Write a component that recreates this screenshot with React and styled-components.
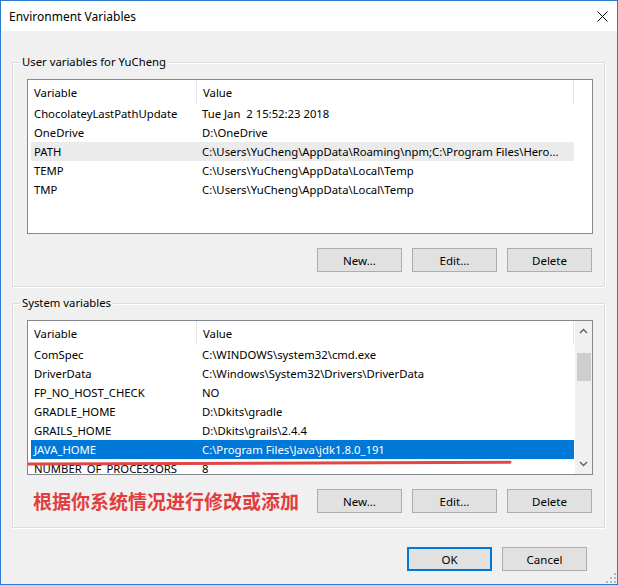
import React from 'react';
import styled, { createGlobalStyle } from 'styled-components';

const GlobalStyle = createGlobalStyle`
    html, body {
        margin: 0;
        padding: 0;
        background: #f0f0f0;
    }
    * {
        box-sizing: border-box;
    }
`;

const Window = styled.div`
    width: 618px;
    height: 585px;
    border: 1px solid #2b7ccf;
    background: #f0f0f0;
    display: flex;
    flex-direction: column;
    position: relative;
    font-family: "Noto Sans", "Open Sans", sans-serif;
    font-size: 11.3px;
    color: #000;
`;

const TitleBar = styled.div`
    height: 30px;
    background: #fff;
    display: flex;
    align-items: center;
    justify-content: space-between;
    padding-left: 8px;
    padding-right: 9px;
    font-size: 12px;
`;

const Body = styled.div`
    padding: 31px 12px 0 11px;
    display: flex;
    flex-direction: column;
    gap: 16px;
`;

const GroupBox = styled.div`
    position: relative;
    border: 1px solid #dcdcdc;
    box-shadow: 1px 1px 0 #fff, inset 1px 1px 0 #fff;
    padding: 16px 11px 14px 14px;
    display: flex;
    flex-direction: column;
    gap: 14px;
`;

const Legend = styled.span`
    position: absolute;
    top: -9px;
    left: 7px;
    padding: 0 2px;
    line-height: 16px;
    background: #f0f0f0;
`;

const ListBox = styled.div`
    position: relative;
    height: 155px;
    border: 1px solid #828790;
    background: #fff;
    overflow: hidden;
    display: flex;
`;

const ListContent = styled.div`
    flex: 1;
    min-width: 0;
    display: flex;
    flex-direction: column;
`;

const Header = styled.div`
    height: 24px;
    display: grid;
    grid-template-columns: 169px 377px 1fr;
    flex-shrink: 0;
`;

const HeaderCell = styled.div`
    padding-left: 6px;
    display: flex;
    align-items: center;
    border-right: ${props => props.$divider ? '1px solid #e5e5e5' : 'none'};
`;

const Row = styled.div`
    height: 19px;
    flex-shrink: 0;
    margin-left: 3px;
    width: 543px;
    display: grid;
    grid-template-columns: 168px 1fr;
    align-items: center;
    background: ${props => props.$selected ? '#0078d7' : props.$hover ? '#ebebeb' : 'transparent'};
    color: ${props => props.$selected ? '#fff' : '#000'};
`;

const Cell = styled.div`
    padding-left: 3px;
    white-space: pre;
    overflow: hidden;
    text-overflow: ellipsis;
`;

const ScrollBar = styled.div`
    width: 17px;
    flex-shrink: 0;
    background: #f0f0f0;
    display: flex;
    flex-direction: column;
    align-items: center;
`;

const ScrollArrow = styled.div`
    height: 20px;
    width: 17px;
    display: flex;
    align-items: center;
    justify-content: center;
`;

const ScrollThumb = styled.div`
    margin-top: 12px;
    width: 14px;
    height: 28px;
    background: #cdcdcd;
`;

const ScrollTrack = styled.div`
    flex: 1;
`;

const ButtonRow = styled.div`
    display: flex;
    align-items: center;
    gap: 10px;
    justify-content: flex-end;
    padding-right: 1px;
`;

const Note = styled.div`
    margin-left: 6px;
    margin-right: auto;
    color: #e23c3c;
    font-family: "Noto Sans CJK SC", sans-serif;
    font-weight: 700;
    font-size: 19px;
    line-height: 24px;
`;

const Button = styled.button`
    width: 85px;
    height: 24px;
    background: #e1e1e1;
    border: 1px solid ${props => props.$default ? '#0078d7' : '#adadad'};
    box-shadow: ${props => props.$default ? 'inset 0 0 0 1px #0078d7' : 'none'};
    font-family: inherit;
    font-size: 11.5px;
    color: #000;
    padding: 0;
`;

const Footer = styled.div`
    padding: 19px 30px 0 0;
    display: flex;
    justify-content: flex-end;
    gap: 10px;
`;

const Underline = styled.svg`
    position: absolute;
    left: 0;
    top: 139px;
`;

const Grip = styled.svg`
    position: absolute;
    right: 1px;
    bottom: 1px;
`;

const userVariables = [
    ['ChocolateyLastPathUpdate', 'Tue Jan  2 15:52:23 2018'],
    ['OneDrive', 'D:\\OneDrive'],
    ['PATH', 'C:\\Users\\YuCheng\\AppData\\Roaming\\npm;C:\\Program Files\\Hero...'],
    ['TEMP', 'C:\\Users\\YuCheng\\AppData\\Local\\Temp'],
    ['TMP', 'C:\\Users\\YuCheng\\AppData\\Local\\Temp'],
];

const systemVariables = [
    ['ComSpec', 'C:\\WINDOWS\\system32\\cmd.exe'],
    ['DriverData', 'C:\\Windows\\System32\\Drivers\\DriverData'],
    ['FP_NO_HOST_CHECK', 'NO'],
    ['GRADLE_HOME', 'D:\\Dkits\\gradle'],
    ['GRAILS_HOME', 'D:\\Dkits\\grails\\2.4.4'],
    ['JAVA_HOME', 'C:\\Program Files\\Java\\jdk1.8.0_191'],
    ['NUMBER_OF_PROCESSORS', '8'],
];

function Chevron({ up }) {
    return (
        <svg width="9" height="6" viewBox="0 0 9 6">
            <path d={up ? 'M1 5 L4.5 1.5 L8 5' : 'M1 1 L4.5 4.5 L8 1'} fill="none" stroke="#606060" strokeWidth="1.4" />
        </svg>
    );
}

function VariableList({ rows, hover, selected, scroll, children }) {
    return (
        <ListBox>
            <ListContent>
                <Header>
                    <HeaderCell $divider>Variable</HeaderCell>
                    <HeaderCell $divider>Value</HeaderCell>
                    <HeaderCell />
                </Header>
                {rows.map(([name, value]) => (
                    <Row key={name} $hover={name === hover} $selected={name === selected}>
                        <Cell>{name}</Cell>
                        <Cell>{value}</Cell>
                    </Row>
                ))}
            </ListContent>
            {scroll && (
                <ScrollBar>
                    <ScrollArrow><Chevron up /></ScrollArrow>
                    <ScrollThumb />
                    <ScrollTrack />
                    <ScrollArrow><Chevron /></ScrollArrow>
                </ScrollBar>
            )}
            {children}
        </ListBox>
    );
}

function App() {
    return (
        <Window>
            <GlobalStyle />
            <TitleBar>
                <span>Environment Variables</span>
                <svg width="11" height="11" viewBox="0 0 11 11">
                    <path d="M0.5 0.5 L10.5 10.5 M10.5 0.5 L0.5 10.5" stroke="#000" strokeWidth="1" />
                </svg>
            </TitleBar>
            <Body>
                <GroupBox>
                    <Legend>User variables for YuCheng</Legend>
                    <VariableList rows={userVariables} hover="PATH" />
                    <ButtonRow>
                        <Button>New...</Button>
                        <Button>Edit...</Button>
                        <Button>Delete</Button>
                    </ButtonRow>
                </GroupBox>
                <GroupBox>
                    <Legend>System variables</Legend>
                    <VariableList rows={systemVariables} selected="JAVA_HOME" scroll>
                        <Underline width="490" height="6" viewBox="0 0 490 6">
                            <path d="M0 4 L482 2.2" stroke="#e04848" strokeWidth="3" strokeLinecap="round" />
                        </Underline>
                    </VariableList>
                    <ButtonRow>
                        <Note>根据你系统情况进行修改或添加</Note>
                        <Button>New...</Button>
                        <Button>Edit...</Button>
                        <Button>Delete</Button>
                    </ButtonRow>
                </GroupBox>
            </Body>
            <Footer>
                <Button $default>OK</Button>
                <Button>Cancel</Button>
            </Footer>
            <Grip width="11" height="11" viewBox="0 0 11 11">
                {[[9, 1], [9, 5], [9, 9], [5, 5], [5, 9], [1, 9]].map(([x, y]) => (
                    <rect key={`${x}-${y}`} x={x} y={y} width="2" height="2" fill="#b8b8b8" />
                ))}
            </Grip>
        </Window>
    );
}

export default App;
